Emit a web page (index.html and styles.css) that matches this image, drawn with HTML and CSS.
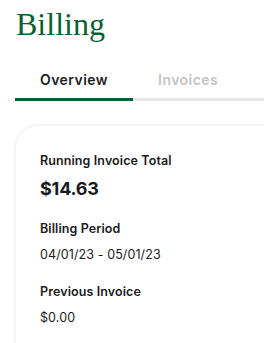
FILE: index.html
```html
<!DOCTYPE html>
<html>
<head>
<meta charset="utf-8">
<link rel="stylesheet" href="styles.css">
</head>
<body>
<div class="page">
  <h1 class="title">Billing</h1>
  <div class="tabs">
    <div class="tab active">Overview</div>
    <div class="tab">Invoices</div>
  </div>
  <div class="card">
    <div class="field">
      <div class="label">Running Invoice Total</div>
      <div class="big">$14.63</div>
    </div>
    <div class="field">
      <div class="label">Billing Period</div>
      <div class="value">04/01/23 - 05/01/23</div>
    </div>
    <div class="field">
      <div class="label">Previous Invoice</div>
      <div class="value">$0.00</div>
    </div>
  </div>
</div>
</body>
</html>
```
FILE: styles.css
```css
html, body { margin: 0; padding: 0; background: #fff; overflow: hidden; }
.page { padding-top: 7px; }
.title {
  margin: 0 0 0 16px;
  font-family: "Liberation Serif", serif;
  font-weight: normal;
  font-size: 32px;
  line-height: 34px;
  color: #0b5f36;
}
.tabs {
  display: flex;
  margin: 29px 0 0 15px;
  border-bottom: 3px solid #e4e7e5;
  font-family: "Inter", sans-serif;
  font-size: 14px;
  letter-spacing: 0.45px;
  font-weight: 600;
}
.tab {
  padding: 0 25px 8px 25px;
  margin-bottom: -3px;
  border-bottom: 3px solid transparent;
  color: #c2c4c3;
  line-height: 20px;
}
.tab.active { color: #1d1d22; border-bottom-color: #0b5f36; }
.card {
  margin: 25px -30px 0 16px;
  border-radius: 22px;
  box-shadow: 0 0 4px rgba(0,0,0,0.12);
  padding: 26px 24px 40px;
  font-family: "Inter", sans-serif;
  color: #1a1a22;
  display: flex;
  flex-direction: column;
  gap: 19px;
}
.label { font-size: 12.5px; font-weight: 600; line-height: 18px; letter-spacing: 0.1px; }
.big { font-size: 18px; font-weight: 700; margin-top: 7px; line-height: 24px; letter-spacing: -0.2px; }
.value { font-size: 12.5px; font-weight: 400; margin-top: 8px; line-height: 18px; letter-spacing: 0.1px; }
```
